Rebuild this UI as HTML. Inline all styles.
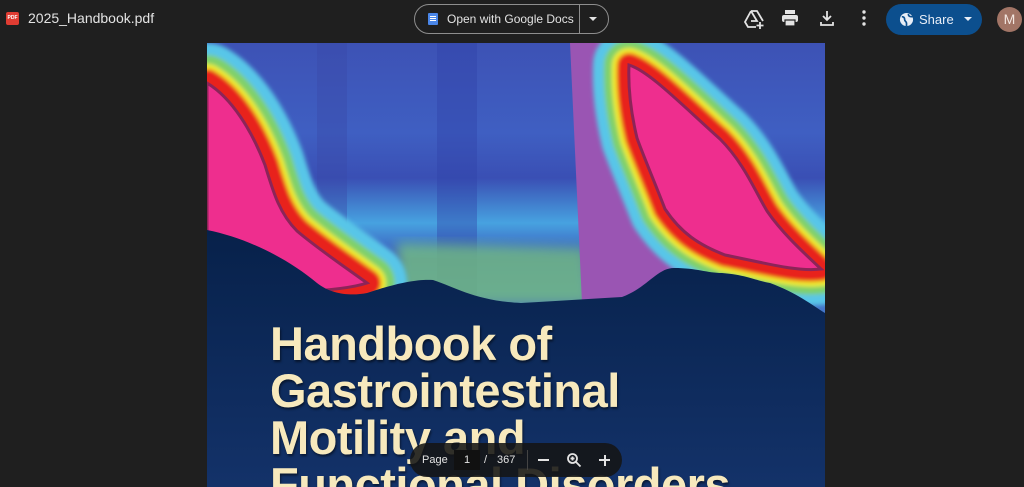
<!DOCTYPE html>
<html style="width:1024px;height:487px;overflow:hidden"><head><meta charset="utf-8"><style>
*{margin:0;padding:0;box-sizing:border-box}
body{width:1024px;height:487px;overflow:hidden;background:#1f1f1f;font-family:"Liberation Sans",sans-serif;position:relative}
.abs{position:absolute}
.title{color:#e3e3e3;font-size:14px}
.btn{position:absolute;left:414px;top:4px;width:195px;height:30px;border:1px solid #8e8e8e;border-radius:16px;color:#e3e3e3;font-size:12px}
.share{position:absolute;left:886px;top:4px;width:96px;height:31px;background:#0c4f8e;border-radius:16px;color:#e8eef7;font-size:13px}
.cover{position:absolute;left:207px;top:43px;width:618px;height:444px;overflow:hidden;background:#0f2a5c}
.ct{position:absolute;left:63px;top:277px;color:#f7e9bd;font-weight:bold;font-size:47px;letter-spacing:-0.5px;line-height:47px;white-space:nowrap;text-shadow:1px 2px 2px rgba(0,0,0,.5)}
.bar{position:absolute;left:410px;top:443px;width:212px;height:34px;background:rgba(20,20,20,.88);border-radius:17px;color:#e3e3e3;font-size:11px}
</style></head><body>
<div class="abs" style="left:6px;top:12px;width:13px;height:13px;background:#e03c32;border-radius:2px;color:#fff;font-size:5px;font-weight:bold;line-height:13px;text-align:center">PDF</div>
<div class="abs title" style="left:28px;top:10px">2025_Handbook.pdf</div>
<div class="btn">
 <div class="abs" style="left:13px;top:8px;width:10px;height:12px;background:#4a86e8;border-radius:1px"></div>
 <div class="abs" style="left:15px;top:11px;width:6px;height:1px;background:#fff;box-shadow:0 2px 0 #fff,0 4px 0 #fff"></div>
 <div class="abs" style="left:32px;top:7px">Open with Google Docs</div>
 <div class="abs" style="left:164px;top:-1px;width:1px;height:30px;background:#8e8e8e"></div>
 <div class="abs" style="left:174px;top:12px;border-left:4px solid transparent;border-right:4px solid transparent;border-top:4px solid #e3e3e3"></div>
</div>
<svg class="abs" style="left:743px;top:8px" width="22" height="22" viewBox="0 0 22 22" fill="none" stroke="#e3e3e3" stroke-width="1.8"><path d="M8 3h6l6 10M8 3L2 14l3 5h8M8 3l6 10H8"/><path d="M17 14v7M13.5 17.5h7"/></svg>
<svg class="abs" style="left:780px;top:8px" width="20" height="20" viewBox="0 0 20 20"><rect x="5" y="2" width="10" height="4" fill="#e3e3e3"/><rect x="2" y="7" width="16" height="7" rx="2" fill="#e3e3e3"/><rect x="5" y="12" width="10" height="6" fill="#e3e3e3" stroke="#1f1f1f" stroke-width="1.2"/></svg>
<svg class="abs" style="left:817px;top:8px" width="20" height="20" viewBox="0 0 20 20" fill="none" stroke="#e3e3e3" stroke-width="1.8"><path d="M10 3v9M6 8l4 4 4-4M4 14v3h12v-3"/></svg>
<svg class="abs" style="left:856px;top:8px" width="16" height="20" viewBox="0 0 16 20" fill="#e3e3e3"><circle cx="8" cy="4" r="1.7"/><circle cx="8" cy="10" r="1.7"/><circle cx="8" cy="16" r="1.7"/></svg>
<div class="share">
 <svg class="abs" style="left:13px;top:8px" width="15" height="15" viewBox="0 0 16 16"><circle cx="8" cy="8" r="7" fill="#e8eef7"/><path d="M3 5c2 0 3 1 3 3s2 2 2 4v3M10 2c0 2 1 3 3 3h2" stroke="#0c4f8e" stroke-width="1.8" fill="none"/></svg>
 <div class="abs" style="left:33px;top:8px">Share</div>
 <div class="abs" style="left:78px;top:13px;border-left:4px solid transparent;border-right:4px solid transparent;border-top:4px solid #e8eef7"></div>
</div>
<div class="abs" style="left:997px;top:7px;width:25px;height:25px;border-radius:50%;background:#a27566;color:#f3e6e0;font-size:14px;line-height:25px;text-align:center">M</div>

<div class="cover">
<svg width="618" height="444" viewBox="0 0 618 444">
<defs>
<linearGradient id="bl" x1="0" y1="0" x2="0" y2="1"><stop offset="0" stop-color="#3d52b5"/><stop offset=".3" stop-color="#3f5fc2"/><stop offset=".45" stop-color="#3a4fb4"/><stop offset=".6" stop-color="#47a2e0"/><stop offset=".72" stop-color="#3a52b8"/><stop offset=".85" stop-color="#4060c0"/><stop offset="1" stop-color="#52b0e0"/></linearGradient>
<linearGradient id="nv" x1="0" y1="0" x2="0" y2="1"><stop offset="0" stop-color="#07214a"/><stop offset="1" stop-color="#14336b"/></linearGradient>
<filter id="bb"><feGaussianBlur stdDeviation="2"/></filter>
<filter id="b6"><feGaussianBlur stdDeviation="6"/></filter>
<path id="lp" d="M0 40 C25 55 45 88 58 122 C66 148 72 170 90 188 C110 205 135 222 160 240 C130 250 60 250 0 250Z"/>
<path id="rp" d="M422 22 C442 28 475 62 513 96 C537 120 548 148 560 168 C575 190 597 210 614 226 C590 229 558 220 518 212 C492 202 474 190 458 166 C448 140 436 112 430 95 C424 70 421 45 422 22Z"/>
</defs>
<rect width="618" height="300" fill="url(#bl)"/>
<rect x="110" y="0" width="30" height="260" fill="#3a48a8" opacity=".4"/>
<rect x="230" y="0" width="40" height="260" fill="#3040a8" opacity=".4"/>
<path d="M190 200 L380 205 L385 262 L190 262Z" fill="#7dd07a" opacity=".7" filter="url(#b6)"/>
<path d="M363 0 L412 0 L480 240 L420 260 L375 260Z" fill="#9a55b3"/>
<g filter="url(#bb)">
<use href="#lp" fill="none" stroke="#59c6e8" stroke-width="80" stroke-linejoin="round"/>
<use href="#lp" fill="none" stroke="#7fd06a" stroke-width="56" stroke-linejoin="round"/>
<use href="#lp" fill="none" stroke="#f2ee2a" stroke-width="38" stroke-linejoin="round"/>
<use href="#lp" fill="none" stroke="#e8201e" stroke-width="28" stroke-linejoin="round"/>
<use href="#rp" fill="none" stroke="#59c6e8" stroke-width="72" stroke-linejoin="round"/>
<use href="#rp" fill="none" stroke="#7fd06a" stroke-width="50" stroke-linejoin="round"/>
<use href="#rp" fill="none" stroke="#f2ee2a" stroke-width="34" stroke-linejoin="round"/>
<use href="#rp" fill="none" stroke="#e8201e" stroke-width="24" stroke-linejoin="round"/>
</g>
<use href="#lp" fill="#ee2e8e" stroke="#8c2458" stroke-width="3"/>
<use href="#rp" fill="#ee2e8e" stroke="#8c2458" stroke-width="3"/>
<path d="M0 187 C40 195 80 215 110 240 C125 252 145 253 160 250 C190 240 210 236 226 237 C250 245 270 258 314 260 C350 258 380 256 415 254 C440 245 450 225 467 225 C490 225 500 230 515 230 C540 232 550 238 563 240 C590 250 605 262 618 270 L618 460 L0 460Z" fill="url(#nv)"/>
</svg>
<div class="ct">Handbook of<br>Gastrointestinal<br>Motility and<br>Functional Disorders</div>
</div>

<div class="bar">
 <div class="abs" style="left:12px;top:11px">Page</div>
 <div class="abs" style="left:44px;top:7px;width:26px;height:20px;background:#111;color:#e3e3e3;text-align:center;line-height:20px">1</div>
 <div class="abs" style="left:74px;top:11px">/</div>
 <div class="abs" style="left:87px;top:11px">367</div>
 <div class="abs" style="left:117px;top:7px;width:1px;height:20px;background:#444"></div>
 <div class="abs" style="left:128px;top:16px;width:11px;height:2px;background:#e3e3e3"></div>
 <svg class="abs" style="left:156px;top:9px" width="16" height="16" viewBox="0 0 16 16" fill="none" stroke="#e3e3e3" stroke-width="1.8"><circle cx="6.5" cy="6.5" r="4.5"/><path d="M10 10l4.5 4.5M6.5 4.5v4M4.5 6.5h4"/></svg>
 <div class="abs" style="left:189px;top:16px;width:11px;height:2px;background:#e3e3e3"></div>
 <div class="abs" style="left:193.5px;top:11.5px;width:2px;height:11px;background:#e3e3e3"></div>
</div>
</body></html>
